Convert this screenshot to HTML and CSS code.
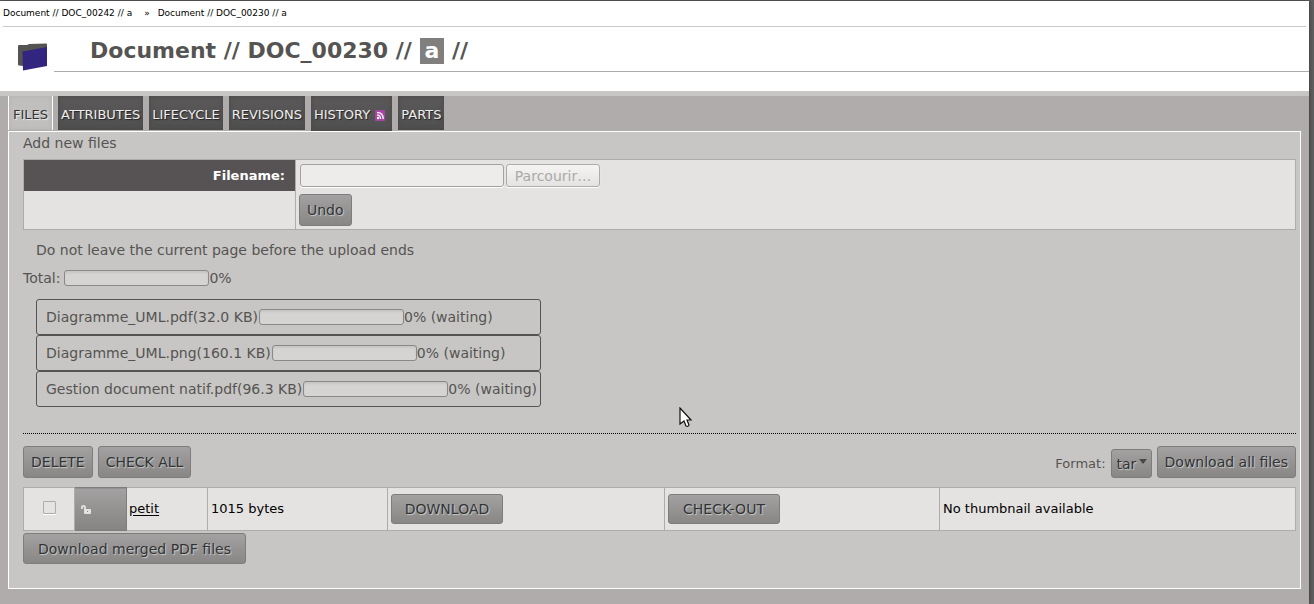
FILE: index.html
```html
<!DOCTYPE html>
<html lang="en">
<head>
<meta charset="utf-8">
<title>Document // DOC_00230 // a</title>
<link rel="stylesheet" href="styles.css">
</head>
<body>
<div class="page">
  <header class="header">
    <nav class="history" aria-label="Recent">
      <a href="#">Document // DOC_00242 // a</a>
      <span class="history-sep">»</span>
      <a class="history-current" href="#">Document // DOC_00230 // a</a>
    </nav>
    <div class="title-row">
      <svg class="folder" width="30" height="30" viewBox="0 0 30 30" aria-hidden="true">
        <path fill="#555452" d="M0 4Q0 3 1 3L9 3L11 2L28 1.500Q29 1.500 29 2.500V22L5 24L1 23.500Q0 23.500 0 22.500Z"/>
        <path fill="#32257f" d="M4.500 9.500L29 5V24L5 28.500Z"/>
      </svg>
      <h1 class="title">Document // DOC_00230 // <span class="revision">a</span> //</h1>
    </div>
  </header>
  <main class="content">
    <nav class="tabs" aria-label="Sections">
      <a class="tab tab-active" href="#">FILES</a>
      <a class="tab" href="#">ATTRIBUTES</a>
      <a class="tab" href="#">LIFECYCLE</a>
      <a class="tab" href="#">REVISIONS</a>
      <a class="tab tab-feed" href="#">HISTORY
        <svg width="10" height="11" viewBox="0 0 10 11" aria-hidden="true">
          <rect width="10" height="11" rx="1" fill="#a744a3"/>
          <circle cx="3" cy="8" r="1.200" fill="#fff"/>
          <path d="M2 5Q5.500 5 5.500 9M2 2.500Q8.200 2.500 8.200 9" fill="none" stroke="#f7e5f6" stroke-width="1.500"/>
        </svg>
      </a>
      <a class="tab" href="#">PARTS</a>
    </nav>
    <section class="panel">
      <p class="line">Add new files</p>
      <form class="upload">
        <label class="upload-label" for="filename">Filename:</label>
        <div class="upload-field">
          <input class="filename" id="filename" type="text" disabled>
          <button class="browse" type="button" disabled>Parcourir…</button>
        </div>
        <div class="upload-blank"></div>
        <div class="upload-action"><button class="button" type="button">Undo</button></div>
      </form>
      <p class="warning">Do not leave the current page before the upload ends</p>
      <div class="total"><label for="total">Total:</label><progress class="bar bar-total" id="total" value="0" max="100"></progress>0%</div>
      <ul class="queue">
        <li class="queue-item"><label for="p1">Diagramme_UML.pdf(32.0 KB)</label><progress class="bar" id="p1" value="0" max="100"></progress>0% (waiting)</li>
        <li class="queue-item"><label for="p2">Diagramme_UML.png(160.1 KB)</label><progress class="bar" id="p2" value="0" max="100"></progress>0% (waiting)</li>
        <li class="queue-item"><label for="p3">Gestion document natif.pdf(96.3 KB)</label><progress class="bar" id="p3" value="0" max="100"></progress>0% (waiting)</li>
      </ul>
      <div class="toolbar">
        <button class="button" type="button">DELETE</button>
        <button class="button" type="button">CHECK ALL</button>
        <div class="download">
          <label class="format-label" for="format">Format:</label>
          <span class="format-wrap">
            <select class="button format" id="format"><option>tar</option><option>zip</option></select>
            <svg class="arrow" width="8" height="5" viewBox="0 0 8 5" aria-hidden="true"><path fill="#484848" d="M0 0H8L4 5Z"/></svg>
          </span>
          <button class="button" type="button">Download all files</button>
        </div>
      </div>
      <table class="files">
        <colgroup><col class="c-check"><col class="c-lock"><col class="c-name"><col class="c-size"><col class="c-get"><col class="c-out"><col></colgroup>
        <tbody>
          <tr>
            <td class="cell-check"><input class="check" type="checkbox" aria-label="Select petit"></td>
            <td class="cell-lock">
              <svg class="lock" width="10" height="10" viewBox="0 0 10 10" aria-hidden="true">
                <path d="M1 4V2Q1 1 2.500 1T4 2V5" fill="none" stroke="#e4e3e1" stroke-width="1.800"/>
                <rect x="3" y="4" width="7" height="5" rx="1" fill="#e4e3e1"/>
                <rect x="6" y="6" width="1" height="1" fill="#8a8988"/>
              </svg>
            </td>
            <td class="cell-name"><a class="file-link" href="#">petit</a></td>
            <td>1015 bytes</td>
            <td><button class="button button-cell" type="button">DOWNLOAD</button></td>
            <td><button class="button button-cell" type="button">CHECK-OUT</button></td>
            <td>No thumbnail available</td>
          </tr>
        </tbody>
      </table>
      <button class="button button-merged" type="button">Download merged PDF files</button>
    </section>
  </main>
</div>
<svg class="pointer" width="14" height="22" viewBox="0 0 14 22" aria-hidden="true">
  <path d="M1 1V17L5 14L7 19Q9 20 10 18L8 13H12Z" fill="#fff" stroke="#111" stroke-width="1.2"/>
</svg>
</body>
</html>
```
FILE: styles.css
```css
* { box-sizing: border-box; }
body {
  margin: 0;
  min-height: 100vh;
  display: flex;
  padding: 1px 5px 0 0;
  background: #626161;
  color: #555452;
  font: 14px/16px "DejaVu Sans", sans-serif;
}
button, input, select { font: inherit; margin: 0; }
.page {
  flex: 1;
  display: flex;
  flex-direction: column;
  background: #b0acab;
  box-shadow: 0 0 5px #333;
}
.header {
  background: #fff;
  border-bottom: 5px solid #c7c6c4;
  padding-bottom: 19px;
}
.history {
  display: flex;
  height: 26px;
  margin: 0 3px;
  padding-top: 4px;
  border-bottom: 1px solid #c9c9c9;
  font-size: 9px;
  color: #000;
}
.history a { color: #000; text-decoration: none; }
.history-sep { margin: 0 8px 0 12px; }
.title-row { display: flex; padding-left: 18px; }
.folder { margin: 15px 6px 0 0; }
.title {
  flex: 1;
  margin: 0;
  height: 45px;
  padding: 11px 0 0 36px;
  border-bottom: 1px solid #adacab;
  font-size: 22px;
  line-height: 26px;
}
.revision {
  display: inline-block;
  padding: 0 5px;
  background: #807f7e;
  color: #fff;
}
.content { padding: 0 8px 15px; }
.tabs { display: flex; align-items: flex-start; gap: 6px; height: 35px; }
.tab {
  height: 34px;
  padding: 11px 3px 0;
  background: linear-gradient(#5b5959, #504f4f);
  box-shadow: inset 0 0 5px #484648;
  color: #eee;
  font-size: 13px;
  text-decoration: none;
  text-shadow: 1px 1px 1px #222;
}
.tab-active {
  padding: 11px 4px 0;
  border: solid #fff;
  border-width: 0 1px;
  margin-right: -1px;
  background: #c0bfbd;
  box-shadow: inset 0 0 5px #b2b1b0;
  color: #333;
  text-shadow: 1px 1px 1px #eee;
}
.tab-feed { height: 35px; padding-right: 7px; }
.tab-feed svg { margin-left: 1px; vertical-align: -2px; }
.panel {
  padding: 3px 4px 24px 14px;
  border: 1px solid #fff;
  background: #c7c6c4;
}
.line { margin: 0 0 8px; }
.upload {
  display: grid;
  grid-template-columns: 272px 1fr;
  border: 1px solid #adacab;
  background: #e4e3e1;
}
.upload-label {
  padding: 8px 10px 0 0;
  background: #575354;
  border-right: 1px solid #adacab;
  color: #fff;
  font-size: 13px;
  font-weight: bold;
  text-align: right;
}
.upload-field { display: flex; gap: 2px; height: 31px; padding: 4px; }
.upload-blank { border-right: 1px solid #adacab; }
.upload-action { padding: 3px; }
.filename {
  width: 204px;
  height: 23px;
  border: 1px solid #a3a2a1;
  border-radius: 3px;
  background: #edecea;
  box-shadow: 0 1px 0 #fff;
}
.browse {
  width: 94px;
  height: 23px;
  padding: 0;
  border: 1px solid #adacab;
  border-radius: 3px;
  background: linear-gradient(#f5f4f3, #e4e3e1);
  box-shadow: 0 1px 1px #fff;
  color: #aaa9a7;
}
.button {
  height: 32px;
  padding: 0 7px;
  border: 1px solid #7e7d7c;
  border-radius: 3px;
  background: linear-gradient(#a3a1a1, #888785);
  color: #333;
  text-shadow: 1px 1px 1px #ccc;
}
.warning { margin: 12px 13px; }
.total { display: flex; }
.bar {
  appearance: none;
  width: 145px;
  height: 16px;
  margin-left: 1px;
  border: 1px solid #8a8988;
  border-radius: 3px;
  background: #d5d4d2;
  box-shadow: inset 0 2px 2px #c7c6c4;
}
.bar-total { margin-left: 4px; }
.bar::-webkit-progress-bar { background: transparent; }
.queue {
  width: fit-content;
  margin: 13px 13px 26px;
  padding: 0;
  list-style: none;
}
.queue-item {
  display: flex;
  height: 36px;
  padding: 9px 3px 9px 9px;
  border: 1px solid #555452;
  border-radius: 3px;
}
.toolbar {
  display: flex;
  gap: 5px;
  padding: 12px 0 9px;
  border-top: 1px dotted #000;
}
.download { display: flex; align-items: flex-end; gap: 5px; margin-left: auto; }
.format-label { font-size: 13px; padding-bottom: 6px; }
.format-wrap { position: relative; display: flex; }
.format { appearance: none; height: 29px; width: 41px; padding: 0 5px; }
.arrow { position: absolute; right: 5px; top: 10px; }
.files {
  width: 100%;
  table-layout: fixed;
  border-collapse: collapse;
  background: #e4e3e1;
  color: #000;
  font-size: 13px;
}
.files td { height: 43px; padding: 0 3px; border: 1px solid #adacab; }
.c-check { width: 51px; }
.c-lock { width: 52px; }
.c-name { width: 81px; }
.c-size { width: 180px; }
.c-get { width: 277px; }
.c-out { width: 275px; }
.files .cell-check { text-align: center; }
.check {
  appearance: none;
  width: 13px;
  height: 13px;
  border: 1px solid #adacab;
  border-radius: 1px;
  box-shadow: 0 1px 0 #fff;
}
.files .cell-lock {
  padding: 4px 0 0 6px;
  border: 1px solid #7e7d7c;
  background: linear-gradient(#a3a1a1, #858482);
}
.files .cell-name { padding-left: 2px; }
.file-link { color: #000; text-underline-offset: 2px; }
.button-cell { display: block; width: 112px; height: 30px; font-size: 14px; }
.button-merged { display: block; height: 31px; margin-top: 2px; padding: 0 14px; }
.pointer { position: absolute; left: 679px; top: 407px; }
```
